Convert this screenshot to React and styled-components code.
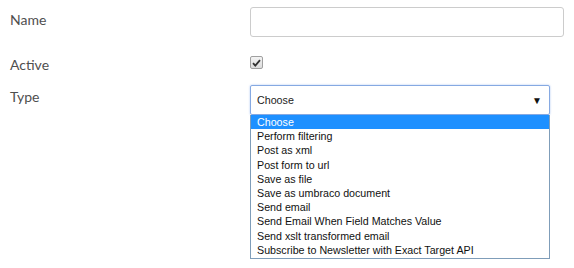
import React from 'react';
import styled, { createGlobalStyle } from 'styled-components';

const GlobalStyle = createGlobalStyle`
  html, body {
    margin: 0;
    padding: 0;
    background: #fff;
  }
  body {
    font-family: Lato, "Open Sans", sans-serif;
  }
`;

const Form = styled.div`
  display: flex;
  flex-direction: column;
  padding: 7px 10px 0 10px;
  width: 554px;
`;

const Row = styled.div`
  display: flex;
  flex-direction: row;
  align-items: flex-start;
  margin-top: ${(p) => p.$top || 0}px;
  height: ${(p) => (p.$height ? `${p.$height}px` : 'auto')};
`;

const Label = styled.label`
  width: 240px;
  flex-shrink: 0;
  font-family: Lato, "Open Sans", sans-serif;
  font-size: 14px;
  line-height: 18px;
  color: #4f4f4f;
  margin-top: ${(p) => p.$offset || 0}px;
`;

const TextInput = styled.input`
  box-sizing: border-box;
  width: 314px;
  height: 30px;
  margin: 0;
  border: 1px solid #cccccc;
  border-radius: 3px;
  outline: none;
  padding: 4px 6px;
  font-size: 12px;
`;

const Checkbox = styled.span`
  box-sizing: border-box;
  display: inline-flex;
  align-items: center;
  justify-content: center;
  width: 13px;
  height: 13px;
  border: 1px solid #a0a0a0;
  border-radius: 2px;
  background: linear-gradient(#f4f4f4, #dcdcdc);
`;

const SelectWrap = styled.div`
  display: flex;
  flex-direction: column;
  width: 300px;
`;

const SelectBox = styled.div`
  box-sizing: border-box;
  display: flex;
  align-items: center;
  justify-content: space-between;
  height: 30px;
  padding: 0 6px 0 6px;
  border: 1px solid #86a9e2;
  border-radius: 2px;
  box-shadow: 0 0 2px rgba(100, 150, 230, 0.6);
  font-family: "Liberation Sans", Arial, sans-serif;
  font-size: 10.7px;
  color: #222;
`;

const Arrow = styled.span`
  font-size: 10px;
  color: #111;
  margin-right: 1px;
`;

const OptionList = styled.ul`
  box-sizing: border-box;
  width: 300px;
  margin: 0;
  padding: 0 0 1px 0;
  list-style: none;
  border: 1px solid #7f9db9;
  border-top: none;
  background: #fff;
`;

const Option = styled.li`
  height: 14.2px;
  line-height: 14px;
  padding-left: 6px;
  font-family: "Liberation Sans", Arial, sans-serif;
  font-size: 10.7px;
  color: ${(p) => (p.$selected ? '#fff' : '#111')};
  background: ${(p) => (p.$selected ? '#1e90ff' : 'transparent')};
  white-space: nowrap;
`;

const options = [
  'Choose',
  'Perform filtering',
  'Post as xml',
  'Post form to url',
  'Save as file',
  'Save as umbraco document',
  'Send email',
  'Send Email When Field Matches Value',
  'Send xslt transformed email',
  'Subscribe to Newsletter with Exact Target API',
];

function CheckMark() {
  return (
    <svg width="9" height="8" viewBox="0 0 9 8">
      <path d="M1 4.2 L3.3 6.6 L8 1.2" fill="none" stroke="#333" strokeWidth="1.8" />
    </svg>
  );
}

export default function App() {
  return (
    <>
      <GlobalStyle />
      <Form>
        <Row $height={30}>
          <Label $offset={4}>Name</Label>
          <TextInput type="text" />
        </Row>
        <Row $top={19} $height={13}>
          <Label $offset={0}>Active</Label>
          <Checkbox>
            <CheckMark />
          </Checkbox>
        </Row>
        <Row $top={16}>
          <Label $offset={3}>Type</Label>
          <SelectWrap>
            <SelectBox>
              <span>Choose</span>
              <Arrow>▼</Arrow>
            </SelectBox>
            <OptionList>
              {options.map((o, i) => (
                <Option key={o} $selected={i === 0}>
                  {o}
                </Option>
              ))}
            </OptionList>
          </SelectWrap>
        </Row>
      </Form>
    </>
  );
}
